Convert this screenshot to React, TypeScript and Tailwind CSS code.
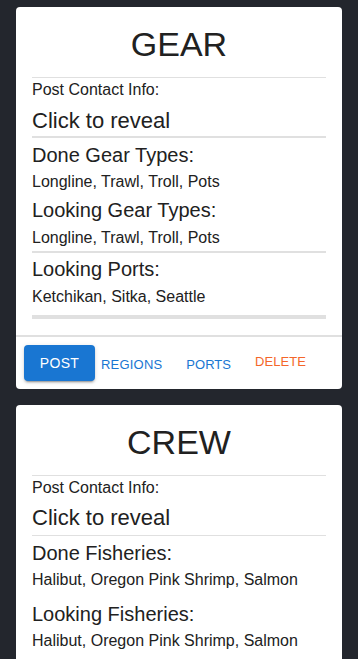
const divider = "h-px bg-[#e0e0e0]";

function Heading({ children, className = "" }: { children: React.ReactNode; className?: string }) {
  return <p className={`text-[20px] leading-[30px] ${className}`}>{children}</p>;
}

function Value({ children, className = "" }: { children: React.ReactNode; className?: string }) {
  return <p className={`text-[16px] leading-6 ${className}`}>{children}</p>;
}

function Actions() {
  return (
    <div className="flex items-center p-2">
      <button className="h-9 w-[71px] rounded-[4px] bg-[#1976d2] text-[14px] tracking-[0.3px] text-white shadow-[0_3px_1px_-2px_rgba(0,0,0,0.2),0_2px_2px_0_rgba(0,0,0,0.14),0_1px_5px_0_rgba(0,0,0,0.12)]">
        POST
      </button>
      <button className="mt-[3px] ml-[6px] text-[13px] tracking-[0.2px] text-[#1976d2]">REGIONS</button>
      <button className="mt-[3px] ml-6 text-[13px] text-[#1976d2]">PORTS</button>
      <button className="mb-[2px] ml-6 text-[13px] tracking-[0.1px] text-[#f4662a]">DELETE</button>
    </div>
  );
}

export default function App() {
  return (
    <div className="min-h-screen bg-[#23262d] px-4 pt-[7px] pb-4 font-['Liberation_Sans',Arial,sans-serif] text-[#212121]">
      <div className="flex flex-col gap-4">
        {/* GEAR */}
        <div className="overflow-hidden rounded-[4px] bg-white">
          <div className="px-4 pt-4 pb-4">
            <h2 className="text-center text-[34px] leading-[42px]">GEAR</h2>
            <div className={`mt-3 ${divider}`} />
            <Value>Post Contact Info:</Value>
            <p className="mt-1 text-[22px] leading-[30px]">Click to reveal</p>
            <div className="h-[2px] bg-[#e0e0e0]" />
            <Heading className="mt-[2px]">Done Gear Types:</Heading>
            <Value>Longline, Trawl, Troll, Pots</Value>
            <Heading className="mt-px">Looking Gear Types:</Heading>
            <Value className="mt-px">Longline, Trawl, Troll, Pots</Value>
            <div className="mt-px h-[2px] bg-[#e0e0e0]" />
            <Heading className="mt-px">Looking Ports:</Heading>
            <Value className="mt-px">Ketchikan, Sitka, Seattle</Value>
            <div className="mt-[6px] h-1 bg-[#e0e0e0]" />
          </div>
          <div className="h-[2px] bg-[#e0e0e0]" />
          <Actions />
        </div>

        {/* CREW */}
        <div className="overflow-hidden rounded-[4px] bg-white">
          <div className="px-4 pt-4 pb-8">
            <h2 className="text-center text-[34px] leading-[42px]">CREW</h2>
            <div className={`mt-3 ${divider}`} />
            <Value>Post Contact Info:</Value>
            <p className="mt-[3px] text-[22px] leading-[30px]">Click to reveal</p>
            <div className={`mt-[2px] ${divider}`} />
            <Heading className="mt-[2px]">Done Fisheries:</Heading>
            <Value>Halibut, Oregon Pink Shrimp, Salmon</Value>
            <Heading className="mt-[7px]">Looking Fisheries:</Heading>
            <Value>Halibut, Oregon Pink Shrimp, Salmon</Value>
          </div>
        </div>
      </div>
    </div>
  );
}
